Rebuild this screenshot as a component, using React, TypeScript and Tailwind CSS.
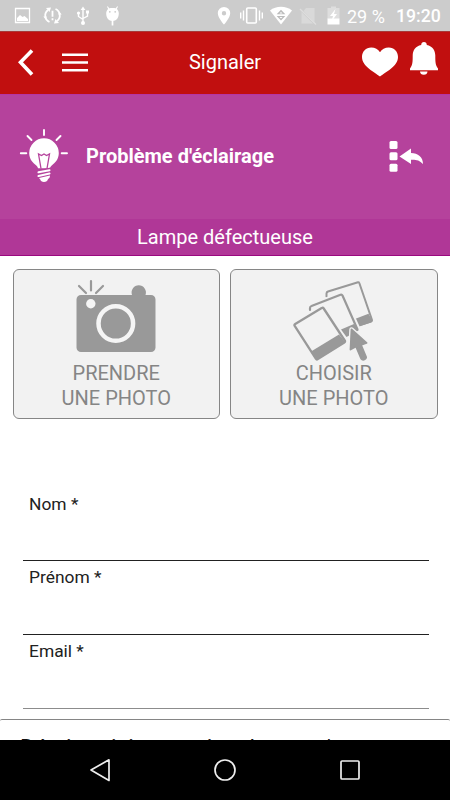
import React from "react";

function StatusBar() {
  return (
    <div className="flex h-[31px] items-start bg-[#cccccc] text-white">
      <svg className="h-[31px] w-[130px] shrink-0" viewBox="0 0 130 31" fill="none">
        <path d="M15.500 8.500h14v14h-14z" stroke="#fff" strokeWidth="1.300" />
        <path d="M17 21v-3l3-3 2.500 2 2-1 3.500 3v2z" fill="#fff" />
        <path d="M49.500 22a7 7 0 0 1-1.500-12M55.500 9a7 7 0 0 1 1.500 12" stroke="#fff" strokeWidth="1.800" />
        <path d="M46 8l5-.5-1.500 4.500zM59 23l-5 .5 1.500-4.500zM43.300 16.500h3.500l-1 3zM61.700 14.500h-3.500l1-3z" fill="#fff" />
        <path d="M52.500 10.800v6M52.500 18.300v2" stroke="#fff" strokeWidth="1.800" />
        <path d="M83 9v14M78.500 13v3.500l4.500 3M87.500 12v4l-4.500 2.500" stroke="#fff" strokeWidth="1.400" />
        <path d="M83 6.500l2.400 3.500h-4.800z" fill="#fff" />
        <circle cx="83" cy="23" r="2" fill="#fff" />
        <circle cx="78.500" cy="13" r="1.600" fill="#fff" />
        <path d="M86 10.500h3v3h-3z" fill="#fff" />
        <path d="M106.200 13.500c0-2 .8-3.500 2-4.500l-1.200-2.300.8-.4 1.400 2c1-.5 5.600-.5 6.600 0l1.400-2 .8.400-1.200 2.300c1.200 1 2 2.500 2 4.500 0 4.500-2.500 7.500-6.300 7.500s-6.300-3-6.300-7.500z" fill="#fff" />
        <path d="M112.500 20v5.500" stroke="#fff" strokeWidth="1.700" />
        <circle cx="109.800" cy="11.800" r=".9" fill="#ccc" />
        <circle cx="115.200" cy="11.800" r=".9" fill="#ccc" />
      </svg>
      <svg className="ml-auto h-[31px] w-[130px] shrink-0" viewBox="214 0 130 31" fill="none">
        <path fillRule="evenodd" d="M224 7a6.200 6.200 0 0 0-6.200 6.200c0 4.600 6.200 11.300 6.200 11.300s6.200-6.700 6.200-11.300A6.200 6.200 0 0 0 224 7zm0 4a2.200 2.200 0 1 1 0 4.400 2.200 2.200 0 0 1 0-4.400z" fill="#fff" />
        <rect x="246.700" y="8" width="9.600" height="15" rx="1" stroke="#fff" strokeWidth="1.600" />
        <path d="M243.500 10.500v10M240.700 12.500v6M259.500 10.500v10M262.300 12.500v6" stroke="#fff" strokeWidth="1.400" />
        <path d="M270 10.500C276 5.500 286 5.500 292 10.500L281 24.500z" fill="#fff" />
        <path d="M281 9.800l4.300 4.500h-8.600zM281 20.500l4.300-4.500h-8.600z" fill="#bbb" />
        <path d="M281 12l1.600 1.500h-3.200zM281 18.500l1.600-1.500h-3.200z" fill="#fff" />
        <path d="M306 8h8.500v14.500L303.500 11zM301.500 12l11.500 11.500h-11.500z" fill="#d9d9d9" />
        <path d="M300 9l16 15.500" stroke="#dedede" strokeWidth="1.200" />
        <path d="M327.500 8h3.500V6.500h5V8h3.500v11h-12z" fill="#dedede" />
        <path d="M327.500 18.500h12v6h-12z" fill="#fff" />
        <path d="M335.500 9l-5.500 7h3l-1.500 5.500 5.500-7.500h-3z" fill="#fff" />
      </svg>
      <span className="ml-[3px] w-[40px] whitespace-nowrap pt-[6px] text-[18px] leading-[21px]">29 %</span>
      <span className="ml-[9px] mr-[10px] w-[44px] whitespace-nowrap pt-[6px] text-[17.700px] font-medium leading-[21px]">19:20</span>
    </div>
  );
}

function Header() {
  return (
    <header className="grid h-[63px] grid-cols-[100px_1fr_100px] items-center border-t border-[#a83a38] bg-[#c10f0f] text-white">
      <svg className="h-[62px] w-[100px]" viewBox="0 32 100 62" fill="none" stroke="#fff">
        <path d="M32 50.500L20.500 62.300L32 74.500" strokeWidth="3.600" />
        <path d="M62 54.700h26M62 62.500h26M62 70.200h26" strokeWidth="2.400" />
      </svg>
      <h1 className="pb-[2px] text-center text-[20px] leading-[24px]">Signaler</h1>
      <svg className="h-[62px] w-[100px]" viewBox="350 32 100 62" fill="#fff">
        <path d="M380 76.500C375 72.500 362 66.500 362 57c0-5.500 4-9.500 9.200-9.500 3.800 0 7 1.700 8.800 4.700 1.800-3 5-4.700 8.800-4.700 5.200 0 9.200 4 9.200 9.500 0 9.500-13 15.500-18 19.500z" />
        <path d="M424 42c-1.700 0-2.800 1.200-2.800 3-5.800 1.300-8.500 5.500-8.500 10.500 0 7-.2 9.500-2.700 13v1.800h28v-1.800c-2.500-3.500-2.700-6-2.700-13 0-5-2.700-9.200-8.500-10.500 0-1.800-1.100-3-2.800-3z" />
        <path d="M420 71.500h7.500c0 2-1.500 3.300-3.700 3.300s-3.800-1.300-3.800-3.300z" />
      </svg>
    </header>
  );
}

function Category() {
  return (
    <section>
      <div className="flex h-[125px] items-center border-t border-[#b535a6] bg-[#b5429c] pb-[2px] text-white">
        <svg className="h-[60px] w-[86px] shrink-0" viewBox="0 126 86 60" fill="none">
          <path d="M44 130v5M27.500 136l4 4M60.500 136l-4 4M20.800 153.300h5.500M61.700 153.300H67" stroke="#fff" strokeWidth="1.900" strokeLinecap="round" />
          <path d="M44 138.300a14.800 14.800 0 0 0-14.800 14.800c0 6.500 4 10 6.800 12.200 1.200 1 1.800 2 2 3h12c.2-1 .8-2 2-3 2.800-2.200 6.800-5.700 6.800-12.200A14.800 14.800 0 0 0 44 138.300z" fill="#fff" />
          <path d="M41 168.500l-2.500-14.500 3 1.500 2.500-1.500 2.500 1.500 3-1.500-2.500 14.500" stroke="#b5429c" strokeWidth="1.300" />
          <path d="M37 172.500l14-3M37 176.500l14-3" stroke="#b5429c" strokeWidth="4" />
          <path d="M38.500 172.300l11-2M38.500 176l11-2.500" stroke="#fff" strokeWidth="2.100" strokeLinecap="round" />
          <path d="M39 178l11-2.500c0 2-.7 3-2 3.500-.2 2-2 3-4 3s-3.500-1-3.700-2.500z" fill="#fff" />
        </svg>
        <h2 className="text-[20px] font-bold leading-[24px]">Problème d'éclairage</h2>
        <svg className="ml-auto h-[60px] w-[70px] shrink-0" viewBox="380 126 70 60" fill="#fff">
          <rect x="389.500" y="141" width="8" height="8" rx="1.500" />
          <rect x="389.500" y="152.300" width="8" height="8" rx="1.500" />
          <rect x="389.500" y="163.700" width="8" height="8" rx="1.500" />
          <path d="M399.500 156.500l11.500-8v4.500c7 .2 12 4 12 11-3.500-4-7-4.500-12-4.300v4.300z" />
        </svg>
      </div>
      <div className="h-[37px] border-b border-[#9a087f] bg-[#b03797] text-center text-[20px] leading-[37px] text-white">
        Lampe défectueuse
      </div>
    </section>
  );
}

function PhotoButton({ label, children }: { label: string; children: React.ReactNode }) {
  return (
    <button className="flex h-[150px] w-[207.500px] flex-col items-center rounded-[6px] border border-[#868686] bg-[#f2f2f2] text-[20px] leading-[25px] text-[#858585]">
      {children}
      <span className="block">{label}</span>
      <span className="block">UNE PHOTO</span>
    </button>
  );
}

function Camera() {
  return (
    <svg className="h-[91px] w-[206px] shrink-0" viewBox="13.500 270 206 91" fill="none">
      <path d="M91.500 281v9.500M79.500 286l7 7M103.500 286l-7 7" stroke="#999" strokeWidth="2.200" strokeLinecap="round" />
      <path d="M81.500 295h51a7.200 7.200 0 1 1 13.500 0h5.500a4.500 4.500 0 0 1 4.500 4.500v48a4.500 4.500 0 0 1-4.500 4.500h-70a4.500 4.500 0 0 1-4.500-4.500v-48a4.500 4.500 0 0 1 4.500-4.500z" fill="#999" />
      <circle cx="91.300" cy="303.700" r="4.700" fill="#f5f5f5" />
      <circle cx="116.300" cy="323.500" r="17.300" stroke="#f5f5f5" strokeWidth="4.500" />
    </svg>
  );
}

function PhotoStack() {
  return (
    <svg className="h-[91px] w-[206px] shrink-0" viewBox="231 270 206 91" fill="none" strokeLinejoin="round">
      <path d="M326.500 296.500v-3q0-1.500 1.500-2L358 282.200q1-.3 1.300.8l12.700 37q.3 1-.8 1.400l-11.500 4" stroke="#999" strokeWidth="2" strokeLinecap="round" />
      <path d="M355.500 318.800l13-5 3.800 6.700q.2 1.500-1 2l-13 4z" fill="#999" />
      <path d="M310 309.500v-2q0-1.500 1.500-2l29-11q1.300-.5 2 .8L358.500 330l-13 6.500z" fill="#f2f2f2" stroke="#f2f2f2" strokeWidth="5" />
      <path d="M310 310v-2q0-1.500 1.500-2l29-11.300q1.300-.5 2 .8L357.500 329.500" stroke="#999" strokeWidth="2.200" strokeLinecap="round" />
      <path d="M341 329.500l13-5.500 4.500 6.500-12 6.500z" fill="#999" />
      <path d="M294.800 326.500l27.700-18.200 22 33.500-28.200 17.700z" fill="#f2f2f2" stroke="#f2f2f2" strokeWidth="6" />
      <path d="M294.700 325.800q-.7-1.100.5-1.900l26.500-15.800q1.200-.8 2 .4l21 32q.8 1.200-.4 2l-26.500 16.600q-1.200.8-2-.4z" stroke="#999" strokeWidth="2.300" />
      <path d="M311 351.500l28-17 6 7.500-28.500 18z" fill="#999" />
      <path d="M351.500 329.500l15 13.500-5.500 1.800 5 12q.5 1.800-1.500 2.700t-3.300-.8l-5.200-12.200-5.500 3z" fill="#f2f2f2" stroke="#f2f2f2" strokeWidth="4.500" />
      <path d="M351.500 329.500l15 13.500-5.500 1.800 5 12q.5 1.800-1.500 2.700t-3.300-.8l-5.200-12.200-5.500 3z" fill="#999" stroke="#999" strokeWidth="1.800" />
    </svg>
  );
}

function Field({ label, className }: { label: string; className: string }) {
  return (
    <label className={`ml-[23px] mr-[21px] block border-b pl-[6px] text-[17.400px] leading-[21px] text-[#212121] ${className}`}>
      {label}
    </label>
  );
}

function NavigationBar() {
  return (
    <nav className="flex h-[60px] items-center justify-between bg-black px-[85px]">
      <svg className="h-[30px] w-[30px]" viewBox="85 755 30 30" fill="none" stroke="#eee" strokeWidth="1.700" strokeLinejoin="round">
        <path d="M91 770L109 759.800v20.700z" />
      </svg>
      <svg className="h-[30px] w-[30px]" viewBox="210 755 30 30" fill="none" stroke="#eee" strokeWidth="1.700">
        <circle cx="225" cy="770" r="10" />
      </svg>
      <svg className="h-[30px] w-[30px]" viewBox="335 755 30 30" fill="none" stroke="#eee" strokeWidth="1.700">
        <rect x="341" y="761" width="18" height="18" rx="1" />
      </svg>
    </nav>
  );
}

export default function App() {
  return (
    <div className="flex h-[800px] w-[450px] flex-col overflow-hidden bg-white font-[Roboto,sans-serif]">
      <StatusBar />
      <Header />
      <Category />
      <main className="flex min-h-0 flex-1 flex-col overflow-hidden">
        <div className="flex justify-between pl-[12.500px] pr-[12.500px] pt-[13px]">
          <PhotoButton label="PRENDRE">
            <Camera />
          </PhotoButton>
          <PhotoButton label="CHOISIR">
            <PhotoStack />
          </PhotoButton>
        </div>
        <form className="mt-[72px] shrink-0">
          <Field label="Nom *" className="h-[70px] border-[#212121] pt-[3px]" />
          <Field label="Prénom *" className="h-[74px] border-[#212121] pt-[6px]" />
          <Field label="Email *" className="h-[74px] border-[#8c8c8c] pt-[6px]" />
        </form>
        <div className="mt-[10px] shrink-0 rounded-[2px] border-t border-[#858585] pl-[20px] pt-[14px] text-[22.500px] leading-[26px] text-[#111111]">
          Décrivez ici votre signalement *
        </div>
      </main>
      <NavigationBar />
    </div>
  );
}
